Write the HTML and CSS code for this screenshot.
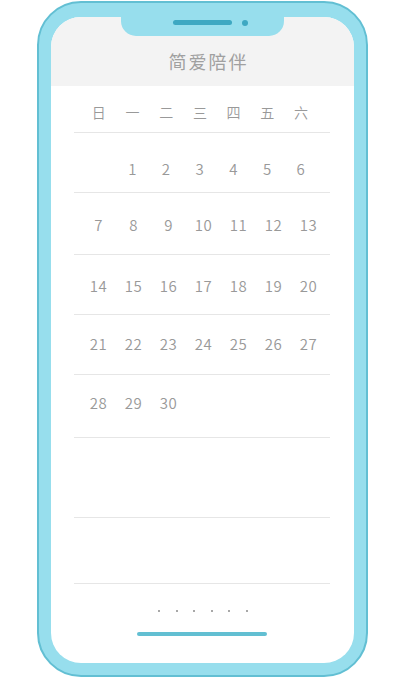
FILE: index.html
```html
<!DOCTYPE html>
<html lang="zh">
<head>
<meta charset="utf-8">
<title>简爱陪伴</title>
<link rel="stylesheet" href="styles.css">
</head>
<body>
<div class="phone">
  <div class="notch"><span class="speaker"></span><span class="camera"></span></div>
  <div class="screen">
    <header class="header"><h1 class="title">简爱陪伴</h1></header>
    <div class="calendar">
      <div class="row week tight">
        <span>日</span><span>一</span><span>二</span><span>三</span><span>四</span><span>五</span><span>六</span>
      </div>
      <div class="row r1 tight">
        <span></span><span>1</span><span>2</span><span>3</span><span>4</span><span>5</span><span>6</span>
      </div>
      <div class="row r2">
        <span>7</span><span>8</span><span>9</span><span>10</span><span>11</span><span>12</span><span>13</span>
      </div>
      <div class="row r3">
        <span>14</span><span>15</span><span>16</span><span>17</span><span>18</span><span>19</span><span>20</span>
      </div>
      <div class="row r4">
        <span>21</span><span>22</span><span>23</span><span>24</span><span>25</span><span>26</span><span>27</span>
      </div>
      <div class="row r5">
        <span>28</span><span>29</span><span>30</span>
      </div>
      <div class="row r6"></div>
      <div class="row r7"></div>
    </div>
    <div class="dots"><i></i><i></i><i></i><i></i><i></i><i></i></div>
    <div class="home-bar"></div>
  </div>
</div>
</body>
</html>
```

FILE: styles.css
```css
* { box-sizing: border-box; }
html, body { margin: 0; padding: 0; background: #fff; }
body {
  font-family: "Noto Sans CJK SC", "Noto Sans", sans-serif;
  padding: 1px 0 0 37px;
}
.phone {
  position: relative;
  width: 331px;
  height: 676px;
  background: #97deed;
  border: 2px solid #62bfd3;
  border-radius: 44px;
  padding: 14px 12px 13px 12px;
}
.notch {
  position: absolute;
  left: 82px;
  top: 14px;
  width: 163px;
  height: 19px;
  background: #97deed;
  border-radius: 0 0 15px 15px;
  display: flex;
  align-items: flex-start;
  padding: 3px 0 0 52px;
  gap: 10px;
  z-index: 2;
}
.speaker {
  width: 59px;
  height: 5px;
  border-radius: 3px;
  background: #3ea8c2;
}
.camera {
  width: 6px;
  height: 6px;
  border-radius: 50%;
  background: #3ea8c2;
}
.screen {
  width: 303px;
  height: 646px;
  background: #fff;
  border-radius: 30px;
  overflow: hidden;
  display: flex;
  flex-direction: column;
}
.header {
  height: 69px;
  background: #f3f3f3;
  padding-top: 32px;
  flex: none;
}
.title {
  margin: 0;
  font-size: 18px;
  font-weight: 400;
  letter-spacing: 2px;
  color: #a0a0a0;
  text-align: center;
  line-height: 24px;
  padding-left: 12px;
}
.calendar {
  margin: 0 24px 0 23px;
}
.row {
  display: grid;
  grid-template-columns: repeat(7, 35px);
  padding-left: 7px;
  border-bottom: 1px solid #e6e6e6;
  font-size: 15px;
  font-weight: 350;
  letter-spacing: 0.5px;
  line-height: 20px;
  color: #999;
}
.row span { text-align: center; }
.row.tight {
  grid-template-columns: repeat(7, 33.7px);
  padding-left: 8px;
}
.week { height: 47px; padding-top: 16px; font-size: 14px; letter-spacing: 0; }
.r1 { height: 60px; padding-top: 26px; }
.r2 { height: 62px; padding-top: 22px; }
.r3 { height: 60px; padding-top: 21px; }
.r4 { height: 60px; padding-top: 19px; }
.r5 { height: 63px; padding-top: 18px; }
.r6 { height: 80px; }
.r7 { height: 66px; }
.dots {
  display: flex;
  justify-content: center;
  gap: 15.6px;
  margin-top: 26px;
  padding-left: 1px;
}
.dots i {
  width: 2px;
  height: 2px;
  background: #a8a8a8;
}
.home-bar {
  width: 130px;
  height: 4px;
  border-radius: 2px;
  background: #62bfd2;
  margin: 20px auto 0;
  position: relative;
  left: -1px;
}
```
